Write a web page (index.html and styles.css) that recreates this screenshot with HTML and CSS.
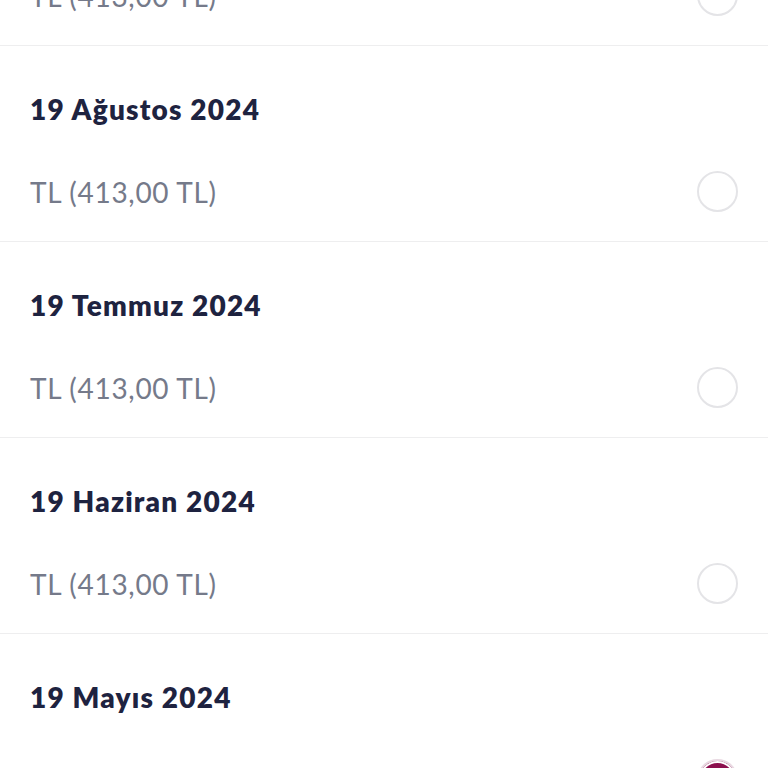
FILE: index.html
```html
<!DOCTYPE html>
<html lang="tr">
<head>
    <meta charset="UTF-8">
    <meta name="viewport" content="width=device-width, initial-scale=1.0">
    <title>Fatura Seçimi</title>
    <link rel="stylesheet" href="styles.css">
</head>
<body>
    <div class="bill-list">
        <div class="bill-item">
            <div class="bill-date">19 Eylül 2024</div>
            <div class="bill-row">
                <span class="bill-amount">TL (413,00 TL)</span>
                <span class="radio"></span>
            </div>
        </div>
        <div class="bill-item">
            <div class="bill-date">19 Ağustos 2024</div>
            <div class="bill-row">
                <span class="bill-amount">TL (413,00 TL)</span>
                <span class="radio"></span>
            </div>
        </div>
        <div class="bill-item">
            <div class="bill-date">19 Temmuz 2024</div>
            <div class="bill-row">
                <span class="bill-amount">TL (413,00 TL)</span>
                <span class="radio"></span>
            </div>
        </div>
        <div class="bill-item">
            <div class="bill-date">19 Haziran 2024</div>
            <div class="bill-row">
                <span class="bill-amount">TL (413,00 TL)</span>
                <span class="radio"></span>
            </div>
        </div>
        <div class="bill-item">
            <div class="bill-date">19 Mayıs 2024</div>
            <div class="bill-row">
                <span class="bill-amount">TL (413,00 TL)</span>
                <span class="radio checked"></span>
            </div>
        </div>
    </div>
</body>
</html>
```

FILE: styles.css
```css
body {
    margin: 0;
    padding: 0;
    background-color: #ffffff;
    font-family: Lato, 'Noto Sans', sans-serif;
    overflow: hidden;
    height: 768px;
}

/* list is scrolled, first item cut off at the top */
.bill-list {
    margin-top: -150px;
}

.bill-item {
    padding: 47px 30px 29px;
    border-bottom: 1px solid #eeeeef;
}

.bill-date {
    font-size: 28px;
    line-height: 32px;
    font-weight: 800;
    letter-spacing: 1.2px;
    color: #1e2340;
}

.bill-row {
    display: flex;
    align-items: center;
    justify-content: space-between;
    height: 41px;
    margin-top: 46px;
}

.bill-amount {
    font-size: 28px;
    letter-spacing: 0.7px;
    color: #757a8a;
}

.radio {
    width: 37px;
    height: 37px;
    border: 2px solid #e4e4e7;
    border-radius: 50%;
}

.radio.checked {
    border-color: #e9d9e2;
    background-color: #8c0f4e;
    box-shadow: inset 0 0 0 2px #ffffff;
}
```
